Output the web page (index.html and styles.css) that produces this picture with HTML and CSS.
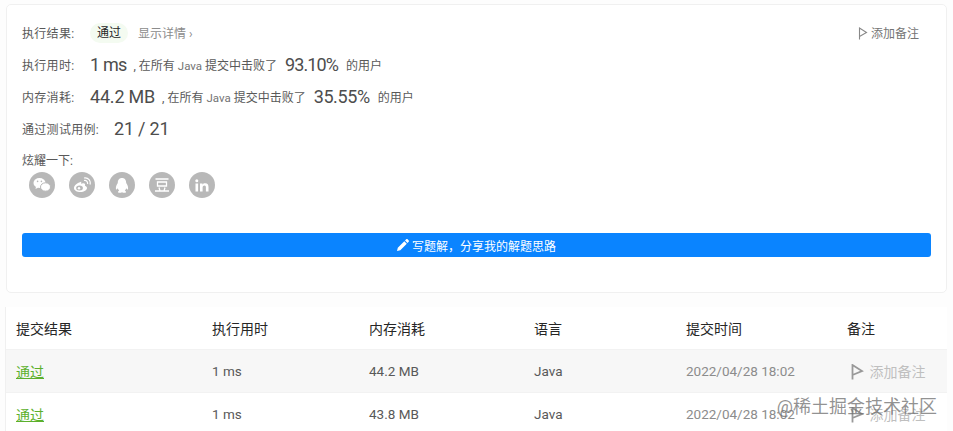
FILE: index.html
```html
<!DOCTYPE html>
<html>
<head>
  <title>提交记录</title>
  <link rel="stylesheet" href="styles.css">
</head>
<body>
  <div class="card result">
    <div class="row row-status">
      <span class="label">执行结果:</span>
      <span class="badge">通过</span>
      <span class="details">显示详情 ›</span>
      <span class="note">
        <svg class="flag" width="10" height="13" viewBox="0 0 10 13"><path d="M1.5 12.5V1l7 4.5-7 4" fill="none" stroke="#888" stroke-width="1.1"/></svg>
        添加备注
      </span>
    </div>
    <div class="row row-time">
      <span class="label">执行用时:</span>
      <span class="big ms">1 ms</span>
      <span class="small">, 在所有 <i>Java</i> 提交中击败了</span>
      <span class="big pct">93.10%</span>
      <span class="small">的用户</span>
    </div>
    <div class="row row-mem">
      <span class="label">内存消耗:</span>
      <span class="big">44.2 MB</span>
      <span class="small">, 在所有 <i>Java</i> 提交中击败了</span>
      <span class="big pct pct-wide">35.55%</span>
      <span class="small">的用户</span>
    </div>
    <div class="row row-cases">
      <span class="label label-wide">通过测试用例:</span>
      <span class="big">21 / 21</span>
    </div>
    <div class="row row-share">炫耀一下:</div>
    <div class="share">
      <span class="circle">
        <svg width="18" height="16" viewBox="0 0 18 16" fill="#fff"><ellipse cx="6.5" cy="6" rx="6" ry="5"/><path d="M3 9.5 2.5 12l3-1.5z"/><ellipse cx="12.5" cy="10" rx="5" ry="4.2" stroke="#b8b8b8"/><circle cx="4.6" cy="4.4" r=".8" fill="#b8b8b8"/><circle cx="8.4" cy="4.4" r=".8" fill="#b8b8b8"/></svg>
      </span>
      <span class="circle">
        <svg width="18" height="16" viewBox="0 0 18 16"><path d="M7.5 5C4 6 1 8.500 1 11c0 2.500 3 4 6.500 4s6.500-2 6.500-4c0-1.500-1.500-2-2-2.300.5-1.500 0-2.700-2-2.500L8 6.800C8.500 5 8.500 4.600 7.500 5z" fill="#fff"/><ellipse cx="6.500" cy="11" rx="3.400" ry="2.500" fill="#b8b8b8"/><circle cx="6" cy="11.200" r="1.200" fill="#fff"/><path d="M11 3.500c2.500-.5 4 1.500 3.500 3.500M11 1c4.500-.8 7 3 6 6.500" fill="none" stroke="#fff" stroke-width="1.200"/></svg>
      </span>
      <span class="circle">
        <svg width="16" height="17" viewBox="0 0 16 17" fill="#fff"><path d="M8 1C5 1 3.800 3.300 3.800 6 2.500 8 1.500 10 2 12.500c.5.300 1.200-.5 1.700-1.200.3 1 .8 1.800 1.500 2.400-1 .4-1.400 1-1.200 1.500.5.800 3 .6 4 0 1 .6 3.500.8 4 0 .2-.5-.2-1.100-1.200-1.500.7-.6 1.200-1.400 1.500-2.400.5.700 1.200 1.500 1.700 1.200.5-2.500-.5-4.500-1.800-6.500C12.200 3.300 11 1 8 1z"/></svg>
      </span>
      <span class="circle">
        <svg width="16" height="16" viewBox="0 0 16 16" fill="none" stroke="#fff" stroke-width="1.300"><path d="M1.500 2h13M3.500 5h9v4h-9zM1 14h14M5 10.500 6 14M11 10.500 10 14"/></svg>
      </span>
      <span class="circle">
        <svg width="14" height="13" viewBox="0 0 14 13" fill="#fff"><rect x=".5" y="4.500" width="2.600" height="8"/><circle cx="1.800" cy="1.800" r="1.500"/><path d="M5 4.500h2.500v1.200C8 4.800 9 4.300 10.300 4.300c2.300 0 3.200 1.400 3.200 3.700v4.500h-2.600V8.400c0-1.200-.4-1.900-1.400-1.900-1.100 0-1.900.8-1.900 2v4H5z"/></svg>
      </span>
    </div>
    <button class="write">
      <svg width="12" height="12" viewBox="0 0 12 12" fill="#fff"><path d="M0 12l.8-3.300 6.500-6.500 2.500 2.500-6.500 6.500zM8 1.500 9.200.3c.4-.4 1-.4 1.400 0l1.100 1.100c.4.400.4 1 0 1.400L10.500 4z"/></svg>
      写题解，分享我的解题思路
    </button>
  </div>

  <div class="card table">
    <div class="tr th">
      <span>提交结果</span><span>执行用时</span><span>内存消耗</span><span>语言</span><span>提交时间</span><span>备注</span>
    </div>
    <div class="tr odd">
      <a class="pass">通过</a><span>1 ms</span><span>44.2 MB</span><span>Java</span><span class="date">2022/04/28 18:02</span>
      <span class="add">
        <svg width="13" height="16" viewBox="0 0 13 16"><path d="M1.500 15.500V1l9.500 6-9.500 4" fill="none" stroke="#999" stroke-width="1.800"/></svg>
        添加备注
      </span>
    </div>
    <div class="tr">
      <a class="pass">通过</a><span>1 ms</span><span>43.8 MB</span><span>Java</span><span class="date">2022/04/28 18:02</span>
      <span class="add">
        <svg width="13" height="16" viewBox="0 0 13 16"><path d="M1.500 15.500V1l9.500 6-9.500 4" fill="none" stroke="#999" stroke-width="1.800"/></svg>
        添加备注
      </span>
    </div>
  </div>

  <div class="watermark">@稀土掘金技术社区</div>
</body>
</html>
```

FILE: styles.css
```css
html, body {
  height: 100%;
  overflow: hidden;
}

body {
  margin: 0;
  padding: 4px 6px 0 5px;
  box-sizing: border-box;
  position: relative;
  background-color: #fdfdfd;
  color: #595959;
  font-family: Roboto, "Noto Sans CJK SC", sans-serif;
  font-size: 12px;
}

.card {
  background-color: #fff;
  border: 1px solid #f0f0f0;
  border-radius: 5px;
}

.result {
  height: 289px;
  margin-left: 1px;
  padding: 12px 15px 0 15px;
  box-sizing: border-box;
}

.row {
  display: flex;
  align-items: center;
  height: 32px;
}

.row-status {
  height: 31px;
}

.row-mem {
  height: 33px;
}

.row-cases {
  height: 31px;
}

.row-share {
  height: 30px;
}

.label {
  width: 68px;
  letter-spacing: 0.3px;
}

.label-wide {
  width: 92px;
}

.badge {
  width: 38px;
  line-height: 20px;
  text-align: center;
  color: #262626;
  background-color: #f4fbf1;
  border-radius: 10px;
}

.details {
  margin-left: 10px;
  color: #8c8c8c;
}

.note {
  margin-left: auto;
  margin-right: 12px;
  color: #757575;
}

.flag {
  vertical-align: -2px;
}

.big {
  font-family: Roboto, sans-serif;
  font-size: 18px;
  letter-spacing: -0.2px;
  color: #4d4d4d;
}

.ms {
  letter-spacing: -0.8px;
}

.pct {
  margin: 0 1px 0 8px;
  letter-spacing: -0.9px;
}

.pct-wide {
  letter-spacing: -0.4px;
}

.small {
  margin-left: 7px;
  white-space: pre;
}

.small i {
  font-style: normal;
  font-size: 11.5px;
  color: #737373;
}

.share {
  display: flex;
  gap: 14px;
  margin: -2px 0 0 7px;
}

.circle {
  display: flex;
  align-items: center;
  justify-content: center;
  width: 26px;
  height: 26px;
  border-radius: 50%;
  background-color: #b8b8b8;
}

.write {
  display: block;
  width: 100%;
  height: 24px;
  margin-top: 35px;
  padding: 0;
  border: none;
  border-radius: 3px;
  background-color: #0a84ff;
  color: #fff;
  font-family: inherit;
  font-size: 12px;
}

.table {
  margin-top: 14px;
  height: 140px;
  overflow: hidden;
  border-width: 0 0 0 1px;
  border-radius: 0;
}

.tr {
  display: grid;
  grid-template-columns: 196px 157px 165px 152px 161px 1fr;
  align-items: center;
  height: 43px;
  padding-left: 10px;
  font-size: 13.5px;
  border-bottom: 1px solid #f2f2f2;
  box-sizing: border-box;
}

.th {
  color: #262626;
  font-size: 14px;
}

.odd {
  background-color: #f7f7f7;
}

.pass {
  color: #5cb02c;
  font-size: 14px;
  text-decoration: underline;
}

.date {
  color: #8c8c8c;
}

.add {
  color: #bfbfbf;
  margin-left: 4px;
  font-size: 14px;
  white-space: nowrap;
}

.add svg {
  vertical-align: -3px;
  margin-right: 2px;
}

.watermark {
  position: absolute;
  right: 16px;
  top: 392px;
  font-size: 18px;
  color: rgba(110, 110, 110, 0.75);
}
```
